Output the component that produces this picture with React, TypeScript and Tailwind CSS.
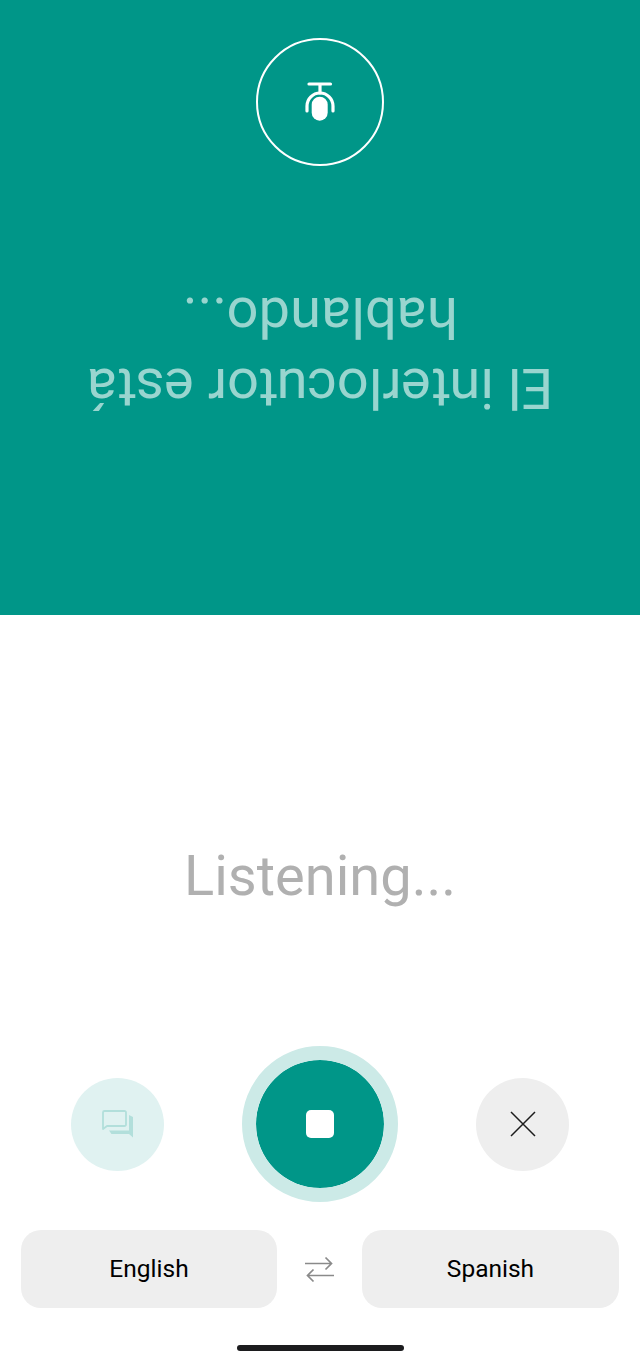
export default function App() {
  return (
    <div className="flex h-[1367px] w-[640px] flex-col overflow-hidden bg-white font-['Roboto',sans-serif]">
      {/* partner's side, shown upside down */}
      <div className="flex h-[615px] rotate-180 flex-col items-center justify-between bg-[#009688] pt-[192px] pb-[38px]">
        <div className="w-[520px] text-center text-[56px] leading-[71px] text-[#99d5cf]">
          El interlocutor está hablando...
        </div>
        <div className="flex h-32 w-32 items-center justify-center rounded-full border-2 border-white">
          <svg width="32" height="44" viewBox="0 0 32 44" fill="none">
            <rect x="8.3" y="3.3" width="16" height="24" rx="8" fill="#fff" />
            <path d="M3 13V18A13 13 0 0 0 29 18V13" stroke="#fff" strokeWidth="3.2" strokeLinecap="round" />
            <path d="M16 31V40M5.5 40H27" stroke="#fff" strokeWidth="3.2" strokeLinecap="round" />
          </svg>
        </div>
      </div>

      <div className="flex h-[431px] items-start justify-center pt-[224px]">
        <span className="text-[56px] leading-[74px] text-[#b0b0b0]">Listening...</span>
      </div>

      <div className="flex items-center justify-between pr-[71px] pl-[71px]">
        <button type="button" className="flex h-[93px] w-[93px] items-center justify-center rounded-full bg-[#e0f2f1]">
          <svg width="34" height="30" viewBox="0 0 34 30" fill="none">
            <path d="M3.5 2H23.5A1.5 1.5 0 0 1 25 3.5V15.5A1.5 1.5 0 0 1 23.5 17H6L2 20V3.5A1.5 1.5 0 0 1 3.5 2Z" stroke="#b2dfdb" strokeWidth="1.8" strokeLinejoin="round" />
            <path d="M28 6L32 8V28.5L28 25H10.5L8 21.5H28Z" fill="#b2dfdb" />
          </svg>
        </button>
        <button type="button" className="flex h-[156px] w-[156px] items-center justify-center rounded-full border-[14px] border-[#cceae7] bg-[#009688] bg-clip-padding">
          <div className="h-7 w-7 rounded-[5px] bg-white" />
        </button>
        <button type="button" className="flex h-[93px] w-[93px] items-center justify-center rounded-full bg-[#eeeeee]">
          <svg width="26" height="26" viewBox="0 0 26 26" fill="none">
            <path d="M1 1L25 25M25 1L1 25" stroke="#1c1c1c" strokeWidth="1.5" />
          </svg>
        </button>
      </div>

      <div className="mt-[28px] flex items-center justify-between pr-[21px] pl-[21px]">
        <button type="button" className="h-[78px] w-[256px] rounded-[20px] bg-[#eeeeee] text-[24.5px] text-black">English</button>
        <svg width="34" height="30" viewBox="0 0 34 30" fill="none">
          <path d="M2 9.5H28M22.5 3.5L28.5 9.5L22.5 15.5" stroke="#8a8a8a" strokeWidth="1.7" />
          <path d="M31 21.5H5M10.5 15.5L4.5 21.5L10.5 27.5" stroke="#8a8a8a" strokeWidth="1.7" />
        </svg>
        <button type="button" className="h-[78px] w-[257px] rounded-[20px] bg-[#eeeeee] text-[24.5px] text-black">Spanish</button>
      </div>

      <div className="mt-[37px] flex justify-center pl-px">
        <div className="h-1.5 w-[167px] rounded-full bg-[#1c1c1e]" />
      </div>
    </div>
  );
}
